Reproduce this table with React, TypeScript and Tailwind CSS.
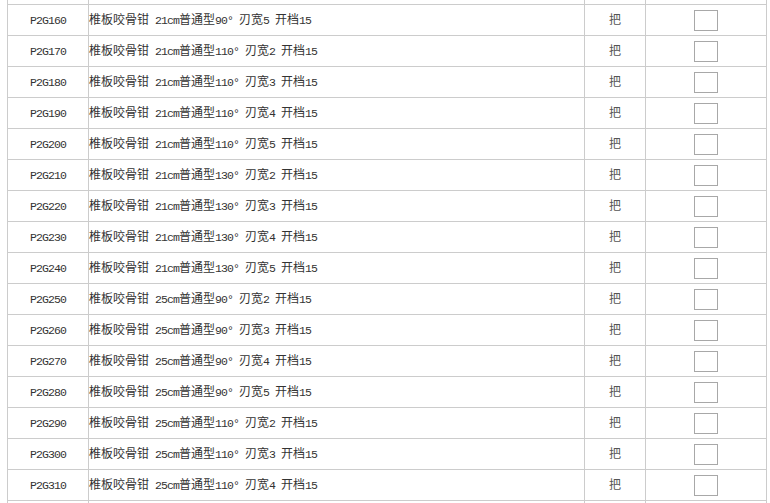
import React from 'react';

const ROWS: [string, string][] = [
  ['P2G160', '椎板咬骨钳 21cm普通型90° 刃宽5 开档15'],
  ['P2G170', '椎板咬骨钳 21cm普通型110° 刃宽2 开档15'],
  ['P2G180', '椎板咬骨钳 21cm普通型110° 刃宽3 开档15'],
  ['P2G190', '椎板咬骨钳 21cm普通型110° 刃宽4 开档15'],
  ['P2G200', '椎板咬骨钳 21cm普通型110° 刃宽5 开档15'],
  ['P2G210', '椎板咬骨钳 21cm普通型130° 刃宽2 开档15'],
  ['P2G220', '椎板咬骨钳 21cm普通型130° 刃宽3 开档15'],
  ['P2G230', '椎板咬骨钳 21cm普通型130° 刃宽4 开档15'],
  ['P2G240', '椎板咬骨钳 21cm普通型130° 刃宽5 开档15'],
  ['P2G250', '椎板咬骨钳 25cm普通型90° 刃宽2 开档15'],
  ['P2G260', '椎板咬骨钳 25cm普通型90° 刃宽3 开档15'],
  ['P2G270', '椎板咬骨钳 25cm普通型90° 刃宽4 开档15'],
  ['P2G280', '椎板咬骨钳 25cm普通型90° 刃宽5 开档15'],
  ['P2G290', '椎板咬骨钳 25cm普通型110° 刃宽2 开档15'],
  ['P2G300', '椎板咬骨钳 25cm普通型110° 刃宽3 开档15'],
  ['P2G310', '椎板咬骨钳 25cm普通型110° 刃宽4 开档15'],
];

// half-width latin glyphs are 6px wide in the original, so squeeze them a bit
const Mixed: React.FC<{ text: string }> = ({ text }) => (
  <>
    {text.split(/([\x20-\x7E°]+)/).filter(Boolean).map((part, i) =>
      /^[\x20-\x7E°]+$/.test(part) ? (
        <span key={i} className="text-[11.5px] tracking-[-0.9px]">{part}</span>
      ) : (
        <span key={i}>{part}</span>
      )
    )}
  </>
);

// empty strip of the rows above / below that are cut by the window
const Stub: React.FC<{ h: string }> = ({ h }) => (
  <div className={`grid grid-cols-[81px_496px_61px_122px] ${h}`}>
    <div className="border-l border-[#cccccc]" />
    <div className="border-l border-[#cccccc]" />
    <div className="border-l border-[#cccccc]" />
    <div className="border-x border-[#cccccc]" />
  </div>
);

const Row: React.FC<{ code: string; name: string }> = ({ code, name }) => (
  <div className="grid grid-cols-[81px_496px_61px_122px] h-[31px] border-b border-[#cccccc]">
    <div className="border-l border-[#cccccc] flex items-center justify-center pt-[2px] text-[12px] text-[#333]">
      <Mixed text={code} />
    </div>
    <div className="border-l border-[#cccccc] flex items-center pt-[2px] text-[12px] text-[#333] whitespace-pre">
      <Mixed text={name} />
    </div>
    <div className="border-l border-[#cccccc] flex items-center justify-center pt-[2px] text-[12px] text-[#555]">把</div>
    <div className="border-x border-[#cccccc] flex items-center justify-center">
      <div className="w-[24px] h-[21px] border border-[#a8a8a8] bg-white" />
    </div>
  </div>
);

const App: React.FC = () => {
  return (
    <div className="h-[503px] overflow-hidden bg-white font-['Liberation_Mono','Noto_Sans_CJK_SC',monospace]">
      <div className="ml-[7px] w-[760px]">
        <div className="border-b border-[#cccccc]">
          <Stub h="h-[4px]" />
        </div>
        {ROWS.map(([code, name]) => (
          <Row key={code} code={code} name={name} />
        ))}
        <Stub h="h-[20px]" />
      </div>
    </div>
  );
};

export default App;
